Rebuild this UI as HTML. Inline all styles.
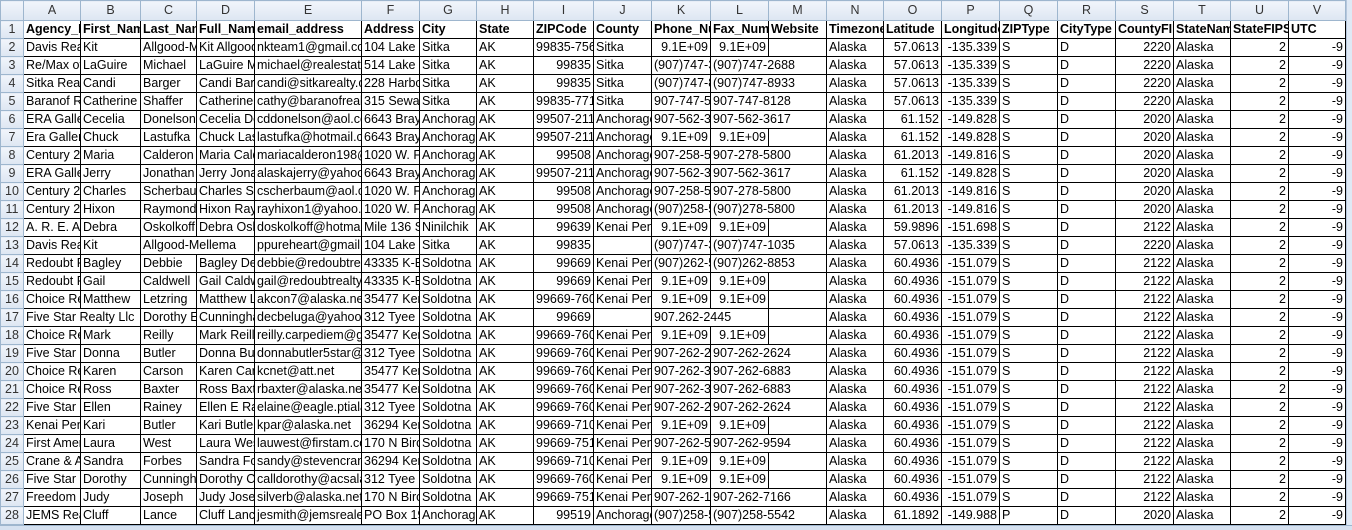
<!DOCTYPE html>
<html><head><meta charset="utf-8"><style>
html,body{margin:0;padding:0;background:#fff;width:1352px;height:530px;overflow:hidden;position:relative}
table{border-collapse:collapse;table-layout:fixed;width:1345px;position:absolute;left:0;top:0;font-family:"Liberation Sans",sans-serif;font-size:12.5px;color:#000}
td{height:17px;border:1px solid #000;white-space:nowrap;overflow:hidden;padding:0 2px;line-height:17px}
tr.h td{height:19px;background:linear-gradient(#f1f5fb,#dde6f2);border-color:#9eb6ce;color:#333;text-align:center;font-weight:normal}
td.rh{background:linear-gradient(#f1f5fb,#dde6f2);border-color:#9eb6ce;color:#333;text-align:center;padding:0}
tr.b td{font-weight:bold}
tr.b td.rh{font-weight:normal}
td.r{text-align:right}
td.s{overflow:visible}
td.nb{border-left-style:hidden}
.sb{position:absolute;left:1346px;top:0;width:6px;height:530px;background:#dfe9f5;border-left:1px solid #b5c7dd}
.bot{position:absolute;left:0;top:525px;width:1352px;height:5px;background:#d5e1f0;border-top:1px solid #9eb6ce}
</style></head><body>
<table>
<colgroup><col style="width:23px"><col style="width:57px"><col style="width:60px"><col style="width:56px"><col style="width:58px"><col style="width:107px"><col style="width:58px"><col style="width:57px"><col style="width:57px"><col style="width:60px"><col style="width:58px"><col style="width:59px"><col style="width:58px"><col style="width:58px"><col style="width:57px"><col style="width:58px"><col style="width:58px"><col style="width:58px"><col style="width:58px"><col style="width:58px"><col style="width:57px"><col style="width:58px"><col style="width:57px"></colgroup>
<tr class="h"><td></td><td>A</td><td>B</td><td>C</td><td>D</td><td>E</td><td>F</td><td>G</td><td>H</td><td>I</td><td>J</td><td>K</td><td>L</td><td>M</td><td>N</td><td>O</td><td>P</td><td>Q</td><td>R</td><td>S</td><td>T</td><td>U</td><td>V</td></tr>
<tr class="b"><td class="rh">1</td><td>Agency_Name</td><td>First_Name</td><td>Last_Name</td><td>Full_Name</td><td>email_address</td><td>Address</td><td>City</td><td>State</td><td>ZIPCode</td><td>County</td><td>Phone_Number</td><td>Fax_Number</td><td>Website</td><td>Timezone</td><td>Latitude</td><td>Longitude</td><td>ZIPType</td><td>CityType</td><td>CountyFIPS</td><td>StateName</td><td>StateFIPS</td><td>UTC</td></tr>
<tr><td class="rh">2</td><td>Davis Realty</td><td>Kit</td><td>Allgood-Mellema</td><td>Kit Allgood</td><td>nkteam1@gmail.com</td><td>104 Lake St</td><td>Sitka</td><td>AK</td><td>99835-7565</td><td>Sitka</td><td class="r">9.1E+09</td><td class="r">9.1E+09</td><td></td><td>Alaska</td><td class="r">57.0613</td><td class="r">-135.339</td><td>S</td><td>D</td><td class="r">2220</td><td>Alaska</td><td class="r">2</td><td class="r">-9</td></tr>
<tr><td class="rh">3</td><td>Re/Max of Sitka</td><td>LaGuire</td><td>Michael</td><td>LaGuire Michael</td><td>michael@realestate</td><td>514 Lake St</td><td>Sitka</td><td>AK</td><td class="r">99835</td><td>Sitka</td><td>(907)747-3300</td><td class="s">(907)747-2688</td><td class="nb"></td><td>Alaska</td><td class="r">57.0613</td><td class="r">-135.339</td><td>S</td><td>D</td><td class="r">2220</td><td>Alaska</td><td class="r">2</td><td class="r">-9</td></tr>
<tr><td class="rh">4</td><td>Sitka Realty</td><td>Candi</td><td>Barger</td><td>Candi Barger</td><td>candi@sitkarealty.com</td><td>228 Harbor Dr</td><td>Sitka</td><td>AK</td><td class="r">99835</td><td>Sitka</td><td>(907)747-8922</td><td class="s">(907)747-8933</td><td class="nb"></td><td>Alaska</td><td class="r">57.0613</td><td class="r">-135.339</td><td>S</td><td>D</td><td class="r">2220</td><td>Alaska</td><td class="r">2</td><td class="r">-9</td></tr>
<tr><td class="rh">5</td><td>Baranof Realty</td><td>Catherine</td><td>Shaffer</td><td>Catherine Shaffer</td><td>cathy@baranofrealty</td><td>315 Seward</td><td>Sitka</td><td>AK</td><td>99835-7710</td><td>Sitka</td><td>907-747-5555</td><td class="s">907-747-8128</td><td class="nb"></td><td>Alaska</td><td class="r">57.0613</td><td class="r">-135.339</td><td>S</td><td>D</td><td class="r">2220</td><td>Alaska</td><td class="r">2</td><td class="r">-9</td></tr>
<tr><td class="rh">6</td><td>ERA Gallery</td><td>Cecelia</td><td>Donelson</td><td>Cecelia Donelson</td><td>cddonelson@aol.com</td><td>6643 Brayton</td><td>Anchorage</td><td>AK</td><td>99507-2112</td><td>Anchorage</td><td>907-562-3600</td><td class="s">907-562-3617</td><td class="nb"></td><td>Alaska</td><td class="r">61.152</td><td class="r">-149.828</td><td>S</td><td>D</td><td class="r">2020</td><td>Alaska</td><td class="r">2</td><td class="r">-9</td></tr>
<tr><td class="rh">7</td><td>Era Gallery</td><td>Chuck</td><td>Lastufka</td><td>Chuck Lastufka</td><td>lastufka@hotmail.com</td><td>6643 Brayton</td><td>Anchorage</td><td>AK</td><td>99507-2112</td><td>Anchorage</td><td class="r">9.1E+09</td><td class="r">9.1E+09</td><td></td><td>Alaska</td><td class="r">61.152</td><td class="r">-149.828</td><td>S</td><td>D</td><td class="r">2020</td><td>Alaska</td><td class="r">2</td><td class="r">-9</td></tr>
<tr><td class="rh">8</td><td>Century 21</td><td>Maria</td><td>Calderon</td><td>Maria Calderon</td><td>mariacalderon198@</td><td>1020 W. Fireweed</td><td>Anchorage</td><td>AK</td><td class="r">99508</td><td>Anchorage</td><td>907-258-5000</td><td class="s">907-278-5800</td><td class="nb"></td><td>Alaska</td><td class="r">61.2013</td><td class="r">-149.816</td><td>S</td><td>D</td><td class="r">2020</td><td>Alaska</td><td class="r">2</td><td class="r">-9</td></tr>
<tr><td class="rh">9</td><td>ERA Gallery</td><td>Jerry</td><td>Jonathan</td><td>Jerry Jonathan</td><td>alaskajerry@yahoo.com</td><td>6643 Brayton</td><td>Anchorage</td><td>AK</td><td>99507-2112</td><td>Anchorage</td><td>907-562-3600</td><td class="s">907-562-3617</td><td class="nb"></td><td>Alaska</td><td class="r">61.152</td><td class="r">-149.828</td><td>S</td><td>D</td><td class="r">2020</td><td>Alaska</td><td class="r">2</td><td class="r">-9</td></tr>
<tr><td class="rh">10</td><td>Century 21</td><td>Charles</td><td>Scherbaum</td><td>Charles Scherbaum</td><td>cscherbaum@aol.com</td><td>1020 W. Fireweed</td><td>Anchorage</td><td>AK</td><td class="r">99508</td><td>Anchorage</td><td>907-258-5000</td><td class="s">907-278-5800</td><td class="nb"></td><td>Alaska</td><td class="r">61.2013</td><td class="r">-149.816</td><td>S</td><td>D</td><td class="r">2020</td><td>Alaska</td><td class="r">2</td><td class="r">-9</td></tr>
<tr><td class="rh">11</td><td>Century 21</td><td>Hixon</td><td>Raymond</td><td>Hixon Raymond</td><td>rayhixon1@yahoo.com</td><td>1020 W. Fireweed</td><td>Anchorage</td><td>AK</td><td class="r">99508</td><td>Anchorage</td><td>(907)258-5000</td><td class="s">(907)278-5800</td><td class="nb"></td><td>Alaska</td><td class="r">61.2013</td><td class="r">-149.816</td><td>S</td><td>D</td><td class="r">2020</td><td>Alaska</td><td class="r">2</td><td class="r">-9</td></tr>
<tr><td class="rh">12</td><td>A. R. E. A. Realty</td><td>Debra</td><td>Oskolkoff</td><td>Debra Oskolkoff</td><td>doskolkoff@hotmail.com</td><td>Mile 136 Sterling</td><td>Ninilchik</td><td>AK</td><td class="r">99639</td><td>Kenai Peninsula</td><td class="r">9.1E+09</td><td class="r">9.1E+09</td><td></td><td>Alaska</td><td class="r">59.9896</td><td class="r">-151.698</td><td>S</td><td>D</td><td class="r">2122</td><td>Alaska</td><td class="r">2</td><td class="r">-9</td></tr>
<tr><td class="rh">13</td><td>Davis Realty</td><td>Kit</td><td class="s">Allgood-Mellema</td><td class="nb"></td><td>ppureheart@gmail.com</td><td>104 Lake St</td><td>Sitka</td><td>AK</td><td class="r">99835</td><td></td><td>(907)747-3300</td><td class="s">(907)747-1035</td><td class="nb"></td><td>Alaska</td><td class="r">57.0613</td><td class="r">-135.339</td><td>S</td><td>D</td><td class="r">2220</td><td>Alaska</td><td class="r">2</td><td class="r">-9</td></tr>
<tr><td class="rh">14</td><td>Redoubt Realty</td><td>Bagley</td><td>Debbie</td><td>Bagley Debbie</td><td>debbie@redoubtrealty</td><td>43335 K-Beach</td><td>Soldotna</td><td>AK</td><td class="r">99669</td><td>Kenai Peninsula</td><td>(907)262-5000</td><td class="s">(907)262-8853</td><td class="nb"></td><td>Alaska</td><td class="r">60.4936</td><td class="r">-151.079</td><td>S</td><td>D</td><td class="r">2122</td><td>Alaska</td><td class="r">2</td><td class="r">-9</td></tr>
<tr><td class="rh">15</td><td>Redoubt Realty</td><td>Gail</td><td>Caldwell</td><td>Gail Caldwell</td><td>gail@redoubtrealty.com</td><td>43335 K-Beach</td><td>Soldotna</td><td>AK</td><td class="r">99669</td><td>Kenai Peninsula</td><td class="r">9.1E+09</td><td class="r">9.1E+09</td><td></td><td>Alaska</td><td class="r">60.4936</td><td class="r">-151.079</td><td>S</td><td>D</td><td class="r">2122</td><td>Alaska</td><td class="r">2</td><td class="r">-9</td></tr>
<tr><td class="rh">16</td><td>Choice Realty</td><td>Matthew</td><td>Letzring</td><td>Matthew Letzring</td><td>akcon7@alaska.net</td><td>35477 Kenai Spur</td><td>Soldotna</td><td>AK</td><td>99669-7602</td><td>Kenai Peninsula</td><td class="r">9.1E+09</td><td class="r">9.1E+09</td><td></td><td>Alaska</td><td class="r">60.4936</td><td class="r">-151.079</td><td>S</td><td>D</td><td class="r">2122</td><td>Alaska</td><td class="r">2</td><td class="r">-9</td></tr>
<tr><td class="rh">17</td><td class="s">Five Star Realty Llc</td><td class="nb"></td><td>Dorothy E.</td><td>Cunningham</td><td>decbeluga@yahoo.com</td><td>312 Tyee St</td><td>Soldotna</td><td>AK</td><td class="r">99669</td><td></td><td class="s">907.262-2445</td><td class="nb"></td><td></td><td>Alaska</td><td class="r">60.4936</td><td class="r">-151.079</td><td>S</td><td>D</td><td class="r">2122</td><td>Alaska</td><td class="r">2</td><td class="r">-9</td></tr>
<tr><td class="rh">18</td><td>Choice Realty</td><td>Mark</td><td>Reilly</td><td>Mark Reilly</td><td>reilly.carpediem@gmail</td><td>35477 Kenai Spur</td><td>Soldotna</td><td>AK</td><td>99669-7602</td><td>Kenai Peninsula</td><td class="r">9.1E+09</td><td class="r">9.1E+09</td><td></td><td>Alaska</td><td class="r">60.4936</td><td class="r">-151.079</td><td>S</td><td>D</td><td class="r">2122</td><td>Alaska</td><td class="r">2</td><td class="r">-9</td></tr>
<tr><td class="rh">19</td><td>Five Star Realty</td><td>Donna</td><td>Butler</td><td>Donna Butler</td><td>donnabutler5star@</td><td>312 Tyee St</td><td>Soldotna</td><td>AK</td><td>99669-7603</td><td>Kenai Peninsula</td><td>907-262-2445</td><td class="s">907-262-2624</td><td class="nb"></td><td>Alaska</td><td class="r">60.4936</td><td class="r">-151.079</td><td>S</td><td>D</td><td class="r">2122</td><td>Alaska</td><td class="r">2</td><td class="r">-9</td></tr>
<tr><td class="rh">20</td><td>Choice Realty</td><td>Karen</td><td>Carson</td><td>Karen Carson</td><td>kcnet@att.net</td><td>35477 Kenai Spur</td><td>Soldotna</td><td>AK</td><td>99669-7602</td><td>Kenai Peninsula</td><td>907-262-3433</td><td class="s">907-262-6883</td><td class="nb"></td><td>Alaska</td><td class="r">60.4936</td><td class="r">-151.079</td><td>S</td><td>D</td><td class="r">2122</td><td>Alaska</td><td class="r">2</td><td class="r">-9</td></tr>
<tr><td class="rh">21</td><td>Choice Realty</td><td>Ross</td><td>Baxter</td><td>Ross Baxter</td><td>rbaxter@alaska.net</td><td>35477 Kenai Spur</td><td>Soldotna</td><td>AK</td><td>99669-7602</td><td>Kenai Peninsula</td><td>907-262-3433</td><td class="s">907-262-6883</td><td class="nb"></td><td>Alaska</td><td class="r">60.4936</td><td class="r">-151.079</td><td>S</td><td>D</td><td class="r">2122</td><td>Alaska</td><td class="r">2</td><td class="r">-9</td></tr>
<tr><td class="rh">22</td><td>Five Star Realty</td><td>Ellen</td><td>Rainey</td><td>Ellen E Rainey</td><td>elaine@eagle.ptialaska</td><td>312 Tyee St</td><td>Soldotna</td><td>AK</td><td>99669-7603</td><td>Kenai Peninsula</td><td>907-262-2445</td><td class="s">907-262-2624</td><td class="nb"></td><td>Alaska</td><td class="r">60.4936</td><td class="r">-151.079</td><td>S</td><td>D</td><td class="r">2122</td><td>Alaska</td><td class="r">2</td><td class="r">-9</td></tr>
<tr><td class="rh">23</td><td>Kenai Peninsula</td><td>Kari</td><td>Butler</td><td>Kari Butler</td><td>kpar@alaska.net</td><td>36294 Kenai Spur</td><td>Soldotna</td><td>AK</td><td>99669-7105</td><td>Kenai Peninsula</td><td class="r">9.1E+09</td><td class="r">9.1E+09</td><td></td><td>Alaska</td><td class="r">60.4936</td><td class="r">-151.079</td><td>S</td><td>D</td><td class="r">2122</td><td>Alaska</td><td class="r">2</td><td class="r">-9</td></tr>
<tr><td class="rh">24</td><td>First American</td><td>Laura</td><td>West</td><td>Laura West</td><td>lauwest@firstam.com</td><td>170 N Birch</td><td>Soldotna</td><td>AK</td><td>99669-7512</td><td>Kenai Peninsula</td><td>907-262-5555</td><td class="s">907-262-9594</td><td class="nb"></td><td>Alaska</td><td class="r">60.4936</td><td class="r">-151.079</td><td>S</td><td>D</td><td class="r">2122</td><td>Alaska</td><td class="r">2</td><td class="r">-9</td></tr>
<tr><td class="rh">25</td><td>Crane &amp; Associates</td><td>Sandra</td><td>Forbes</td><td>Sandra Forbes</td><td>sandy@stevencrane.com</td><td>36294 Kenai Spur</td><td>Soldotna</td><td>AK</td><td>99669-7105</td><td>Kenai Peninsula</td><td class="r">9.1E+09</td><td class="r">9.1E+09</td><td></td><td>Alaska</td><td class="r">60.4936</td><td class="r">-151.079</td><td>S</td><td>D</td><td class="r">2122</td><td>Alaska</td><td class="r">2</td><td class="r">-9</td></tr>
<tr><td class="rh">26</td><td>Five Star Realty</td><td>Dorothy</td><td>Cunningham</td><td>Dorothy Cunningham</td><td>calldorothy@acsalaska</td><td>312 Tyee St</td><td>Soldotna</td><td>AK</td><td>99669-7603</td><td>Kenai Peninsula</td><td class="r">9.1E+09</td><td class="r">9.1E+09</td><td></td><td>Alaska</td><td class="r">60.4936</td><td class="r">-151.079</td><td>S</td><td>D</td><td class="r">2122</td><td>Alaska</td><td class="r">2</td><td class="r">-9</td></tr>
<tr><td class="rh">27</td><td>Freedom Realty</td><td>Judy</td><td>Joseph</td><td>Judy Joseph</td><td>silverb@alaska.net</td><td>170 N Birch</td><td>Soldotna</td><td>AK</td><td>99669-7512</td><td>Kenai Peninsula</td><td>907-262-1000</td><td class="s">907-262-7166</td><td class="nb"></td><td>Alaska</td><td class="r">60.4936</td><td class="r">-151.079</td><td>S</td><td>D</td><td class="r">2122</td><td>Alaska</td><td class="r">2</td><td class="r">-9</td></tr>
<tr><td class="rh">28</td><td>JEMS Realty</td><td>Cluff</td><td>Lance</td><td>Cluff Lance</td><td>jesmith@jemsrealestate</td><td>PO Box 1900</td><td>Anchorage</td><td>AK</td><td class="r">99519</td><td>Anchorage</td><td>(907)258-5000</td><td class="s">(907)258-5542</td><td class="nb"></td><td>Alaska</td><td class="r">61.1892</td><td class="r">-149.988</td><td>P</td><td>D</td><td class="r">2020</td><td>Alaska</td><td class="r">2</td><td class="r">-9</td></tr>
</table>
<div class="sb"></div>
<div class="bot"></div>
</body></html>
